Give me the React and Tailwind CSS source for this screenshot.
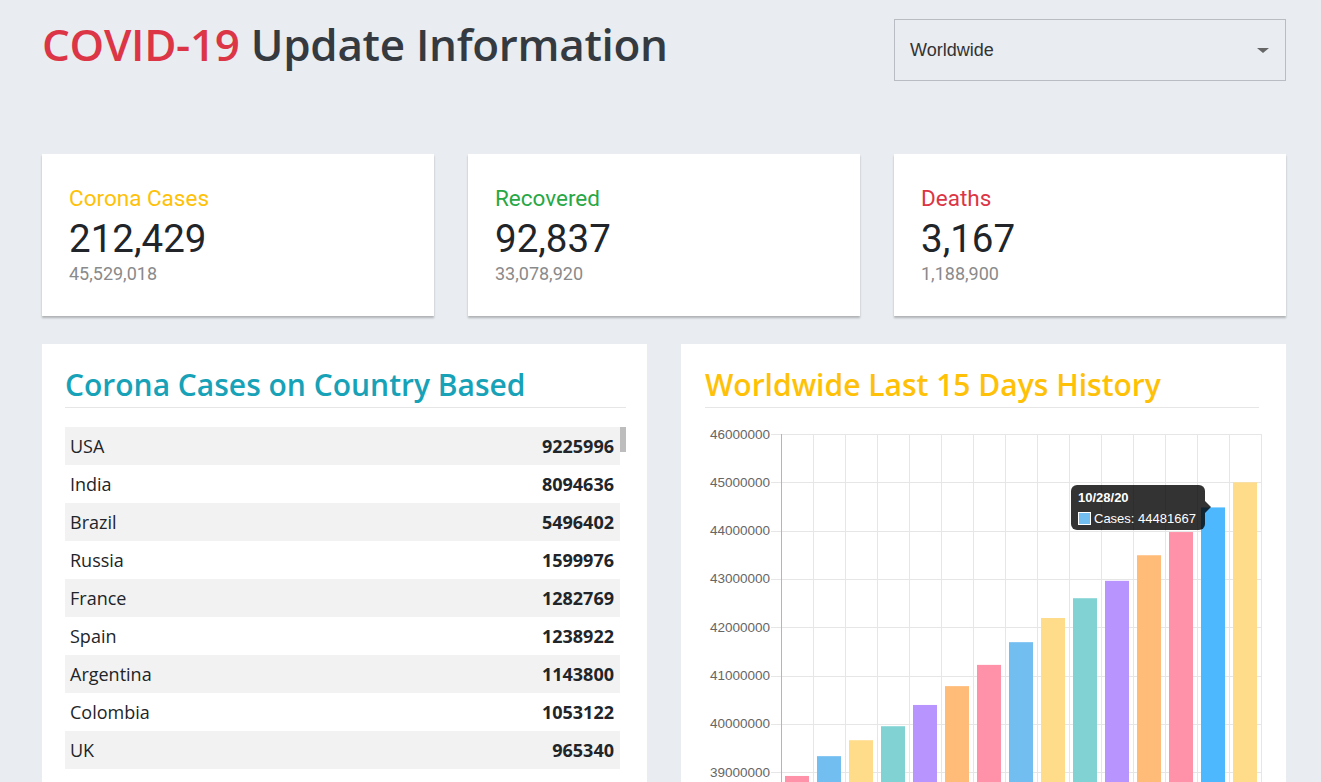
import React from "react";

const stats = [
  { label: "Corona Cases", color: "text-[#ffc107]", today: "212,429", total: "45,529,018" },
  { label: "Recovered", color: "text-[#28a745]", today: "92,837", total: "33,078,920" },
  { label: "Deaths", color: "text-[#dc3545]", today: "3,167", total: "1,188,900" },
];

const countries = [
  ["USA", 9225996],
  ["India", 8094636],
  ["Brazil", 5496402],
  ["Russia", 1599976],
  ["France", 1282769],
  ["Spain", 1238922],
  ["Argentina", 1143800],
  ["Colombia", 1053122],
  ["UK", 965340],
  ["Mexico", 912811],
  ["Peru", 900180],
  ["South Africa", 723682],
];

// last 15 days, in millions
const history = [38.92, 39.33, 39.66, 39.95, 40.39, 40.78, 41.22, 41.69, 42.19, 42.6, 42.96, 43.49, 43.97, 44.48, 45.0];
const palette = ["#ff92a9", "#72bef1", "#ffdc89", "#81d3d3", "#b894ff", "#ffbc79"];

const yOf = (v) => 10 + (46 - v) * 48.3;

function HistoryChart() {
  const ticks = [46, 45, 44, 43, 42, 41, 40, 39, 38];
  const bottom = yOf(38);
  return (
    <div className="relative">
      <svg width="558" height="440" className="block">
        {ticks.map((t) => (
          <g key={t}>
            <line x1="66" x2="557" y1={Math.round(yOf(t)) + 0.5} y2={Math.round(yOf(t)) + 0.5} stroke="#e6e6e6" />
            <text
              x="65"
              y={yOf(t) + 4.5}
              textAnchor="end"
              fontSize="13.5"
              fill="#666"
              fontFamily="'Liberation Sans', Arial, sans-serif"
            >
              {t * 1000000}
            </text>
          </g>
        ))}
        {Array.from({ length: 15 }).map((_, k) => (
          <line key={k} x1={108.5 + 32 * k} x2={108.5 + 32 * k} y1="10" y2={bottom} stroke="#e6e6e6" />
        ))}
        {history.map((v, i) => (
          <rect
            key={i}
            x={80 + 32 * i}
            y={yOf(v)}
            width="24"
            height={bottom - yOf(v)}
            fill={i === 13 ? "#4db8fd" : palette[i % 6]}
          />
        ))}
        <line x1="76.5" x2="76.5" y1="10" y2={bottom} stroke="#b5b5b5" />
      </svg>

      {/* hover tooltip */}
      <div className="absolute left-[366px] top-[61px] w-[134px] h-[45px] rounded-[6px] bg-black/80 px-[7px] pt-[3px] font-['Liberation_Sans',Arial,sans-serif] text-[13px] leading-[19px] text-white">
        <div className="font-bold">10/28/20</div>
        <div className="flex items-center gap-[3px] mt-[2px]">
          <span className="w-[13px] h-[13px] border border-white bg-[#72bef1]" />
          <span>Cases: 44481667</span>
        </div>
        <span className="absolute -right-[6px] top-[16px] w-0 h-0 border-y-[6px] border-y-transparent border-l-[6px] border-l-black/80" />
      </div>
    </div>
  );
}

export default function App() {
  return (
    <div className="h-[782px] overflow-hidden bg-[#e9ecf0] pl-[42px] pr-[35px] pt-[19px]">
      <div className="grid grid-cols-3 gap-[34px]">
        <h1 className="col-span-2 -mt-[1px] text-[44px] leading-[52px] font-semibold text-[#343a40] font-['Open_Sans',sans-serif] tracking-[-0.3px]">
          <span className="text-[#dc3545]">COVID-19</span> Update Information
        </h1>
        <div className="h-[62px] border border-[#b9bdc3] flex items-center justify-between pl-[15px] pr-[15px] font-['Liberation_Sans',Arial,sans-serif] text-[18px] text-[#333]">
          <span className="mt-[1px]">Worldwide</span>
          <span className="w-0 h-0 border-x-[6px] border-x-transparent border-t-[5px] border-t-[#666] mr-[1px]" />
        </div>
      </div>

      <div className="grid grid-cols-3 gap-[34px] mt-[73px]">
        {stats.map((s) => (
          <div
            key={s.label}
            className="h-[162px] bg-white shadow-[0_2px_2px_rgba(0,0,0,0.25)] pl-[27px] pt-[31px] font-['Roboto',sans-serif]"
          >
            <div className={`text-[22.5px] leading-[26px] ${s.color}`}>{s.label}</div>
            <div className="mt-[8px] text-[38.5px] leading-[40px] text-[#212529]">{s.today}</div>
            <div className="mt-[4px] text-[18px] leading-[22px] text-[#8a8a8a]">{s.total}</div>
          </div>
        ))}
      </div>

      <div className="grid grid-cols-2 gap-[34px] mt-[28px]">
        <div className="bg-white px-[21px] pl-[23px] pt-[23px] h-[500px] font-['Open_Sans',sans-serif]">
          <h2 className="text-[30px] leading-[36px] font-semibold text-[#17a2b8]">
            Corona Cases on Country Based
          </h2>
          <div className="mt-[4px] border-t border-[#e6e6e6]" />
          <div className="mt-[19px] flex">
            <div className="flex-1">
              {countries.map(([name, n], i) => (
                <div
                  key={name}
                  className={`h-[38px] flex items-center justify-between pl-[5px] pr-[6px] text-[18px] text-[#212529] ${
                    i % 2 === 0 ? "bg-[#f2f2f2]" : "bg-white"
                  }`}
                >
                  <span>{name}</span>
                  <span className="font-bold">{n}</span>
                </div>
              ))}
            </div>
            <div className="w-[6px] bg-white">
              <div className="h-[25px] bg-[#bdbdbd]" />
            </div>
          </div>
        </div>

        <div className="bg-white pl-[24px] pr-[24px] pt-[23px] h-[500px]">
          <h2 className="text-[30px] leading-[36px] font-semibold text-[#ffc107] font-['Open_Sans',sans-serif]">
            Worldwide Last 15 Days History
          </h2>
          <div className="mt-[4px] mr-[3px] border-t border-[#e6e6e6]" />
          <div className="mt-[16px]">
            <HistoryChart />
          </div>
        </div>
      </div>
    </div>
  );
}
